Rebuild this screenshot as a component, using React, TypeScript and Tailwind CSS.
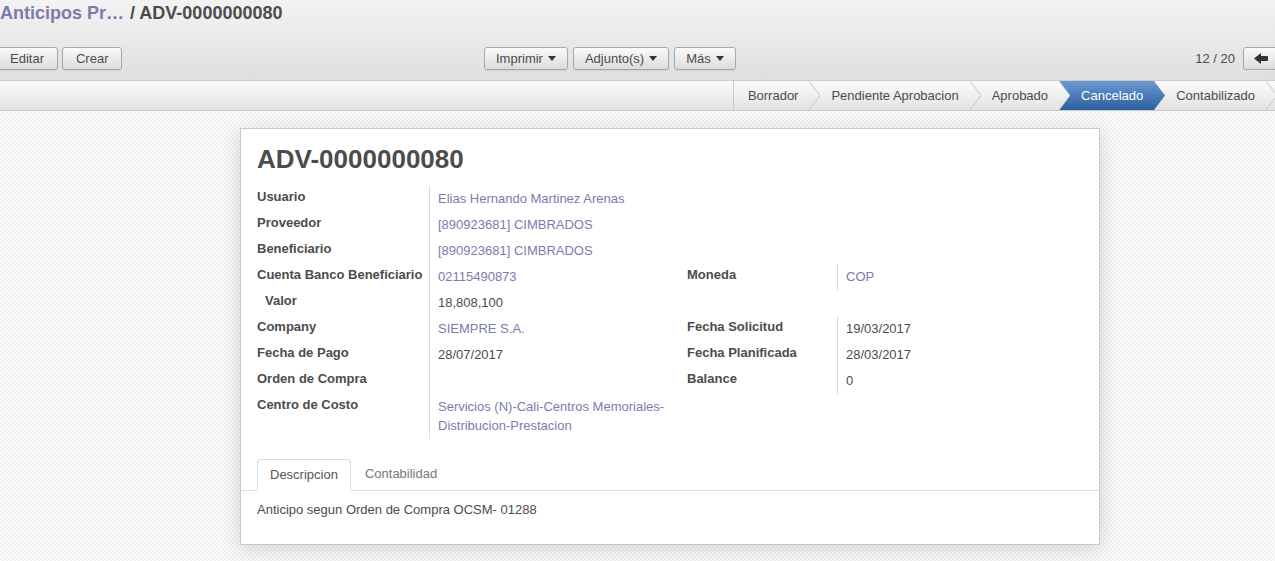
import React from "react";

type Row = {
  label: string;
  value?: string;
  link?: boolean;
  indent?: boolean;
  rLabel?: string;
  rValue?: string;
  rLink?: boolean;
};

const rows: Row[] = [
  { label: "Usuario", value: "Elias Hernando Martinez Arenas", link: true },
  { label: "Proveedor", value: "[890923681] CIMBRADOS", link: true },
  { label: "Beneficiario", value: "[890923681] CIMBRADOS", link: true },
  { label: "Cuenta Banco Beneficiario", value: "02115490873", link: true, rLabel: "Moneda", rValue: "COP", rLink: true },
  { label: "Valor", value: "18,808,100", indent: true },
  { label: "Company", value: "SIEMPRE S.A.", link: true, rLabel: "Fecha Solicitud", rValue: "19/03/2017" },
  { label: "Fecha de Pago", value: "28/07/2017", rLabel: "Fecha Planificada", rValue: "28/03/2017" },
  { label: "Orden de Compra", value: "", rLabel: "Balance", rValue: "0" },
  { label: "Centro de Costo", value: "Servicios (N)-Cali-Centros Memoriales-Distribucion-Prestacion", link: true },
];

const stages = ["Borrador", "Pendiente Aprobacion", "Aprobado", "Cancelado", "Contabilizado"];
const current = "Cancelado";

function Btn({ children, caret, wide }: { children: React.ReactNode; caret?: boolean; wide?: boolean }) {
  return (
    <button
      className={`flex h-[23px] items-center gap-[5px] rounded-[3px] border border-[#a8a8a8] bg-gradient-to-b from-[#fafafa] to-[#dcdcdc] text-[13px] text-[#4c4c4c] shadow-[0_1px_1px_rgba(0,0,0,0.08)] ${
        wide ? "px-[13px]" : "px-[11px]"
      }`}
    >
      {children}
      {caret && (
        <svg width="8" height="5" viewBox="0 0 8 5">
          <path d="M0 0h8L4 5z" fill="#333" />
        </svg>
      )}
    </button>
  );
}

function Arrow({ active }: { active: boolean }) {
  const id = active ? "arrA" : "arrI";
  return (
    <svg className="absolute left-full top-0 z-10" width="11" height="29" viewBox="0 0 11 29">
      <defs>
        <linearGradient id={id} x1="0" y1="0" x2="0" y2="1">
          <stop offset="0" stopColor={active ? "#6b99d1" : "#fcfcfc"} />
          <stop offset="1" stopColor={active ? "#2d609f" : "#e2e2e2"} />
        </linearGradient>
      </defs>
      <polygon points="0,0 11,14.5 0,29" fill={`url(#${id})`} />
      {!active && <polyline points="0,0 11,14.5 0,29" fill="none" stroke="#c6c6c6" strokeWidth="1" />}
    </svg>
  );
}

export default function App() {
  return (
    <div
      className="h-[561px] w-[1275px] overflow-hidden bg-[repeating-conic-gradient(#f1f1f1_0%_25%,#fbfbfb_0%_50%)] bg-[length:4px_4px] text-[13px] text-[#4c4c4c]"
      style={{ fontFamily: '"Liberation Sans", Arial, sans-serif' }}
    >
      {/* control panel */}
      <div className="h-[81px] border-b border-[#c9c9c9] bg-gradient-to-b from-[#f3f3f3] to-[#dfdfdf] pt-[3px]">
        <div className="flex h-[20px] items-center text-[18px] font-bold leading-[20px]">
          <span className="text-[#7c7bad]">Anticipos Pr…</span>
          <span className="ml-[6px]">/ ADV-0000000080</span>
        </div>
        <div className="mt-[24px] flex items-center">
          <div className="-ml-[4px] flex w-[488px] gap-[4px]">
            <Btn wide>Editar</Btn>
            <Btn wide>Crear</Btn>
          </div>
          <div className="flex gap-[5px]">
            <Btn caret>Imprimir</Btn>
            <Btn caret>Adjunto(s)</Btn>
            <Btn caret>Más</Btn>
          </div>
          <div className="-mr-[40px] flex flex-1 items-center justify-end">
            <span className="mr-[8px]">12 / 20</span>
            <div className="flex">
              <button className="flex h-[23px] w-[36px] items-center justify-center rounded-l-[3px] border border-[#a8a8a8] bg-gradient-to-b from-[#fafafa] to-[#dcdcdc]">
                <svg width="14" height="11" viewBox="0 0 14 11">
                  <path d="M0 5.5 L7 0 V3 H13 a1 1 0 0 1 1 1 V7 a1 1 0 0 1 -1 1 H7 V11 Z" fill="#333" />
                </svg>
              </button>
              <button className="flex h-[23px] w-[36px] items-center justify-center rounded-r-[3px] border border-l-0 border-[#a8a8a8] bg-gradient-to-b from-[#fafafa] to-[#dcdcdc]" />
            </div>
          </div>
        </div>
      </div>

      {/* status bar */}
      <div className="flex h-[30px] justify-end border-b border-[#c9c9c9] bg-gradient-to-b from-[#fcfcfc] to-[#e2e2e2] pr-[9px]">
        <div className="flex h-[29px] border-l border-[#c9c9c9]">
          {stages.map((s, i) => {
            const active = s === current;
            return (
              <div
                key={s}
                className={`relative flex h-full items-center pr-[11px] ${i === 0 ? "pl-[14px]" : "pl-[22px]"} ${
                  active ? "bg-gradient-to-b from-[#6b99d1] to-[#2d609f] text-white" : ""
                }`}
              >
                {s}
                <Arrow active={active} />
              </div>
            );
          })}
        </div>
      </div>

      {/* sheet */}
      <div className="ml-[240px] mt-[17px] w-[860px] border border-[#c8c8d3] bg-white px-[16px] pb-[25px] pt-[16px] shadow-[0_4px_20px_rgba(0,0,0,0.15)]">
        <h1 className="text-[26px] font-bold leading-[1.1] text-[#4c4c4c]">ADV-0000000080</h1>

        <div className="mt-[12px] grid grid-cols-[172px_258px_150px_1fr]">
          {rows.map((r) => (
            <React.Fragment key={r.label}>
              <div className={`pt-[2px] font-bold leading-[18px] ${r.indent ? "pl-[8px]" : ""}`}>{r.label}</div>
              <div
                className={`border-l border-[#dcdcdc] pb-[4px] pl-[8px] pr-[6px] pt-[3px] leading-[19px] ${
                  r.link ? "text-[#7c7bad]" : ""
                }`}
              >
                {r.value}
              </div>
              <div className="pt-[2px] font-bold leading-[18px]">{r.rLabel}</div>
              <div
                className={`pb-[4px] pl-[8px] pt-[3px] leading-[19px] ${r.rLabel ? "border-l border-[#dcdcdc]" : ""} ${
                  r.rLink ? "text-[#7c7bad]" : ""
                }`}
              >
                {r.rValue}
              </div>
            </React.Fragment>
          ))}
        </div>

        {/* notebook */}
        <div className="-mx-[16px] mt-[20px] flex border-b border-[#dddddd] pl-[16px]">
          <div className="-mb-px flex h-[32px] items-center rounded-t-[4px] border border-b-white border-[#dddddd] bg-white px-[12px] text-[#555]">
            Descripcion
          </div>
          <div className="ml-[2px] flex h-[31px] items-center px-[12px] text-[#777]">Contabilidad</div>
        </div>
        <p className="mt-[10px] leading-[18px]">Anticipo segun Orden de Compra OCSM- 01288</p>
      </div>
    </div>
  );
}
